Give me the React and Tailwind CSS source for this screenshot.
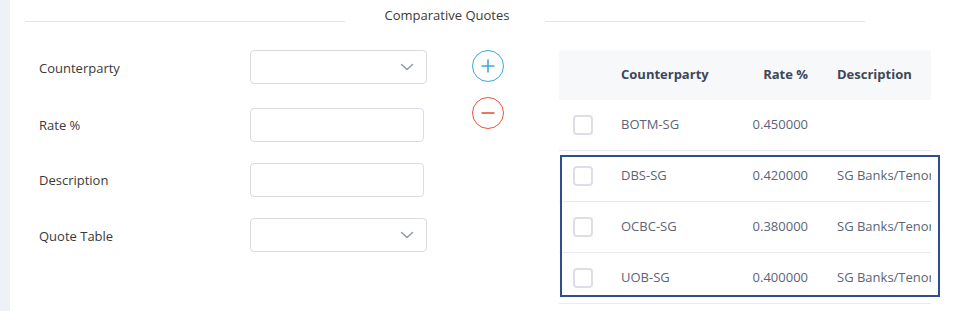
import React from "react";

const font = { fontFamily: '"Open Sans", "Noto Sans", sans-serif' };

function Chevron() {
  return (
    <svg width="14" height="8" viewBox="0 0 14 8" fill="none">
      <path d="M1.5 1.5 L7 6.5 L12.5 1.5" stroke="#8e95a5" strokeWidth="1.4" strokeLinecap="round" strokeLinejoin="round" />
    </svg>
  );
}

function SelectBox() {
  return (
    <div className="flex h-[34px] w-[177px] items-center justify-end rounded-[4px] border border-[#d9dce6] bg-white pr-[12px]">
      <Chevron />
    </div>
  );
}

function InputBox() {
  return <div className="h-[34px] w-[174px] rounded-[4px] border border-[#d9dce6] bg-white" />;
}

function Checkbox() {
  return <div className="h-[20px] w-[20px] rounded-[4px] border-2 border-[#dcdfe8] bg-white" />;
}

const rows = [
  { cp: "BOTM-SG", rate: "0.450000", desc: "" },
  { cp: "DBS-SG", rate: "0.420000", desc: "SG Banks/Tenor" },
  { cp: "OCBC-SG", rate: "0.380000", desc: "SG Banks/Tenor" },
  { cp: "UOB-SG", rate: "0.400000", desc: "SG Banks/Tenor" },
];

export default function App() {
  return (
    <div className="flex h-[311px] w-[974px] bg-white text-[13px]" style={font}>
      <div className="w-[10px] shrink-0 bg-[#eef1f5]" />
      <div className="flex flex-1 flex-col">
        {/* Title row */}
        <div className="flex h-[32px] items-center pl-[15px]">
          <div className="mt-[10px] h-px w-[320px] bg-[#e3e5ea]" />
          <div className="w-[200px] pl-[4px] text-center text-[#3a3a3a]">Comparative Quotes</div>
          <div className="mt-[10px] h-px w-[320px] bg-[#e3e5ea]" />
        </div>

        <div className="mt-[18px] flex">
          {/* Form */}
          <div className="flex w-[240px] flex-col pl-[29px] text-[#3a3a3a]">
            <div className="flex h-[34px] items-center pt-[3px]">Counterparty</div>
            <div className="mt-[24px] flex h-[34px] items-center pt-[2px]">Rate %</div>
            <div className="mt-[21px] flex h-[34px] items-center pt-[2px]">Description</div>
            <div className="mt-[21px] flex h-[34px] items-center pt-[3px]">Quote Table</div>
          </div>
          <div className="flex flex-col">
            <SelectBox />
            <div className="mt-[24px]"><InputBox /></div>
            <div className="mt-[21px]"><InputBox /></div>
            <div className="mt-[21px]"><SelectBox /></div>
          </div>

          {/* Buttons */}
          <div className="ml-[45px] flex flex-col">
            <div className="flex h-[32px] w-[32px] items-center justify-center rounded-full border border-[#3aa8de]">
              <svg width="16" height="16" viewBox="0 0 16 16">
                <path d="M8 1.5 V14.5 M1.5 8 H14.5" stroke="#3aa8de" strokeWidth="1.6" />
              </svg>
            </div>
            <div className="mt-[15px] flex h-[32px] w-[32px] items-center justify-center rounded-full border border-[#e8543a]">
              <svg width="16" height="16" viewBox="0 0 16 16">
                <path d="M1.5 8 H14.5" stroke="#e8543a" strokeWidth="1.6" />
              </svg>
            </div>
          </div>

          {/* Table */}
          <div className="relative ml-[55px] w-[372px]">
            <div className="w-[372px] overflow-hidden">
              <div className="grid h-[50px] grid-cols-[48px_120px_95px_1fr] items-center bg-[#f7f8fa] font-bold text-[#3d4759]">
                <div />
                <div className="pl-[14px]">Counterparty</div>
                <div className="pr-[14px] text-right">Rate %</div>
                <div className="whitespace-nowrap pl-[15px]">Description</div>
              </div>
              {rows.map((r) => (
                <div
                  key={r.cp}
                  className="grid h-[51px] grid-cols-[48px_120px_95px_1fr] items-center border-b border-[#e8eaef] text-[#5b6478]"
                >
                  <div className="pl-[14px]"><Checkbox /></div>
                  <div className="pl-[14px]">{r.cp}</div>
                  <div className="pr-[14px] text-right">{r.rate}</div>
                  <div className="overflow-hidden whitespace-nowrap pl-[15px]">{r.desc}</div>
                </div>
              ))}
            </div>
            <div className="pointer-events-none absolute left-[1px] top-[105px] h-[142px] w-[380px] border-2 border-[#2d4f8e]" />
          </div>
        </div>
      </div>
    </div>
  );
}
